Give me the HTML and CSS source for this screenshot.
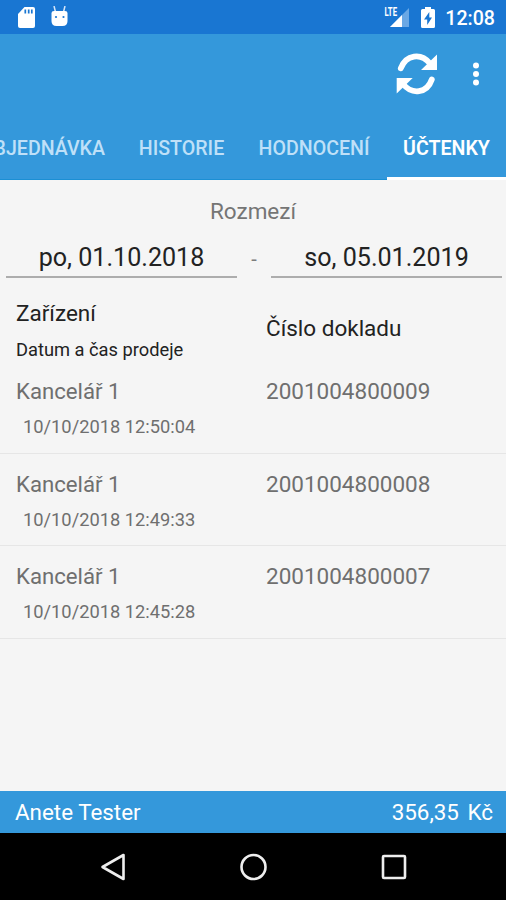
FILE: index.html
```
<!DOCTYPE html>
<html lang="cs">
<head>
<meta charset="utf-8">
<title>Účtenky</title>
<link rel="stylesheet" href="styles.css">
</head>
<body>
<div class="screen">
  <header class="status">
    <svg class="sd" width="17" height="21" viewBox="0 0 17 21"><path fill="#fff" d="M6.500 0H15a2 2 0 0 1 2 2v17a2 2 0 0 1-2 2H2a2 2 0 0 1-2-2V7z"/><path stroke="#1976d2" stroke-width="1.700" d="M7.300 2.600v4M10.700 2.600v4M13.800 2.600v4"/></svg>
    <svg class="droid" width="17" height="21" viewBox="0 0 17 21"><path fill="none" stroke="#d5e6fa" stroke-width="1.500" d="M3 0l1.500 6M14 0l-1.500 6"/><path fill="#fff" d="M0.500 7Q0.500 5 3 5h11q2.500 0 2.500 2v8q0 5-5 5h-6Q0.500 20 0.500 15z"/><circle cx="5" cy="11" r="1.100" fill="#1976d2"/><circle cx="12.500" cy="11" r="1.100" fill="#1976d2"/></svg>
    <svg class="signal" width="26" height="21" viewBox="0 0 26 21"><path fill="#6aa8e5" d="M25 1v19H6z"/><path fill="#fff" d="M18 8v12H6z"/><path fill="#1976d2" d="M0 0h14v10H0z"/><text x="0.500" y="9" textLength="12.500" lengthAdjust="spacingAndGlyphs">LTE</text></svg>
    <svg class="battery" width="14" height="21" viewBox="0 0 14 21"><path fill="#fff" d="M4 0h6v2h2.500Q14 2 14 3.500v16q0 1.500-1.500 1.500h-11Q0 21 0 19.500v-16Q0 2 1.500 2H4z"/><path fill="#1976d2" d="M8.300 5L3 12.500h3.200V18L11 10.500H8.300z"/></svg>
    <span class="clock">12:08</span>
  </header>
  <div class="toolbar">
    <svg class="refresh" width="42" height="42" viewBox="0 0 42 42"><g fill="none" stroke="#fff" stroke-width="5.800" stroke-linecap="round"><path d="M4.800 15.300C10 1.500 25 -0.500 34 10.500"/><path d="M35.800 26.500C31 40.500 16 42 7 31"/></g><path fill="#fff" d="M41 1.500v15.500H25zM0.700 40.500V25h16z"/></svg>
    <svg class="more" width="8" height="24" viewBox="0 0 8 24"><g fill="#fff"><circle cx="4" cy="3.500" r="3"/><circle cx="4" cy="12" r="3"/><circle cx="4" cy="20.500" r="3"/></g></svg>
  </div>
  <nav class="tabs">
    <span class="tab order">OBJEDNÁVKA</span>
    <span class="tab history">HISTORIE</span>
    <span class="tab rating">HODNOCENÍ</span>
    <span class="tab active">ÚČTENKY</span>
  </nav>
  <main>
    <h1>Rozmezí</h1>
    <div class="range">
      <span class="date">po, 01.10.2018</span>
      <span class="dash">-</span>
      <span class="date">so, 05.01.2019</span>
    </div>
    <div class="head">
      <div class="col"><span class="device">Zařízení</span><span class="when">Datum a čas prodeje</span></div>
      <span class="number">Číslo dokladu</span>
    </div>
    <ul>
      <li><div class="col"><span class="name">Kancelář 1</span><span class="time">10/10/2018 12:50:04</span></div><span class="doc">2001004800009</span></li>
      <li><div class="col"><span class="name">Kancelář 1</span><span class="time">10/10/2018 12:49:33</span></div><span class="doc">2001004800008</span></li>
      <li><div class="col"><span class="name">Kancelář 1</span><span class="time">10/10/2018 12:45:28</span></div><span class="doc">2001004800007</span></li>
    </ul>
  </main>
  <footer><span>Anete Tester</span><span class="balance">356,35 Kč</span></footer>
  <div class="navbar">
    <svg width="28" height="28" viewBox="0 0 28 28"><path d="M24.500 2v24L3.500 14z"/></svg>
    <svg width="28" height="28" viewBox="0 0 28 28"><circle cx="13.500" cy="14" r="12"/></svg>
    <svg width="28" height="28" viewBox="0 0 28 28"><rect x="3" y="3" width="22" height="22" rx="1"/></svg>
  </div>
</div>
</body>
</html>
```

FILE: styles.css
```
* { box-sizing: border-box; margin: 0; padding: 0; }
body { font-family: Roboto, sans-serif; }
svg { display: block; flex: none; }
.screen {
  width: 506px; height: 900px; overflow: hidden;
  display: flex; flex-direction: column;
  background: #f5f5f5; white-space: nowrap;
}
.status {
  height: 34px; flex: none; display: flex; align-items: flex-start;
  padding: 7px 11px 0 18px; background: #1976d2; color: #fff;
}
.droid { margin: -1px 0 0 16px; }
.signal { margin: 0 11px 0 auto; overflow: visible; }
.signal text { font-size: 12.5px; font-weight: 700; fill: #fff; }
.battery { margin-right: 10px; }
.clock { font-size: 19.6px; line-height: 23px; font-weight: 500; }
.toolbar {
  height: 79px; flex: none; background: #3498db;
  display: flex; align-items: center; justify-content: flex-end; padding-right: 26px;
}
.refresh { margin-right: 34px; }
.tabs { height: 67px; flex: none; display: flex; background: #3498db; overflow: hidden; }
.tab {
  flex: none; height: 67px; line-height: 71px; text-align: center;
  font-size: 19.6px; font-weight: 500; color: #bfe0f8; border-bottom: 1px solid #1b8fd4;
}
.order { width: 122px; padding-right: 17px; display: flex; justify-content: flex-end; }
.history { width: 119px; }
.rating { width: 146px; }
.active { width: 119px; color: #fff; font-weight: 600; border-bottom: 3px solid #fff; }
main { flex: 1; }
h1 { margin-top: 16px; text-align: center; font-size: 22.5px; line-height: 30px; font-weight: 400; color: #757575; }
.range { display: flex; padding: 0 4px 0 6px; margin-top: 14px; align-items: center; color: #7c7c7c; }
.date {
  width: 231px; height: 38px; line-height: 36px; border-bottom: 2px solid #adadad;
  text-align: center; font-size: 25.1px; color: #222;
}
.dash { flex: 1; text-align: center; font-size: 20px; line-height: 34px; }
.head { display: flex; align-items: flex-start; padding: 17px 0 0 16px; height: 90px; color: #222; }
.col { width: 250px; display: flex; flex-direction: column; }
.device, .number { font-size: 22.5px; line-height: 36px; }
.number { margin-top: 15px; }
.when { font-size: 18.3px; line-height: 37px; }
ul { list-style: none; }
li { display: flex; height: 92.4px; padding: 18px 0 0 16px; border-bottom: 1px solid #e6e6e6; color: #6f6f6f; }
li:first-child { height: 86px; padding-top: 11px; }
.name, .doc { font-size: 22.5px; line-height: 24px; }
.name { font-size: 22.2px; }
.time { margin: 12px 0 0 7px; font-size: 18.3px; line-height: 24px; }
footer {
  height: 42px; flex: none; display: flex; justify-content: space-between; padding: 0 13px 0 15px;
  background: #3498db; color: #fff; font-size: 22.4px; line-height: 43px;
}
.balance { word-spacing: 3px; }
.navbar { height: 67px; flex: none; background: #000; display: flex; align-items: center; justify-content: center; gap: 112.500px; padding-left: 1px; }
.navbar svg { fill: none; stroke: #eee; stroke-width: 2.6; stroke-linejoin: round; }
```
